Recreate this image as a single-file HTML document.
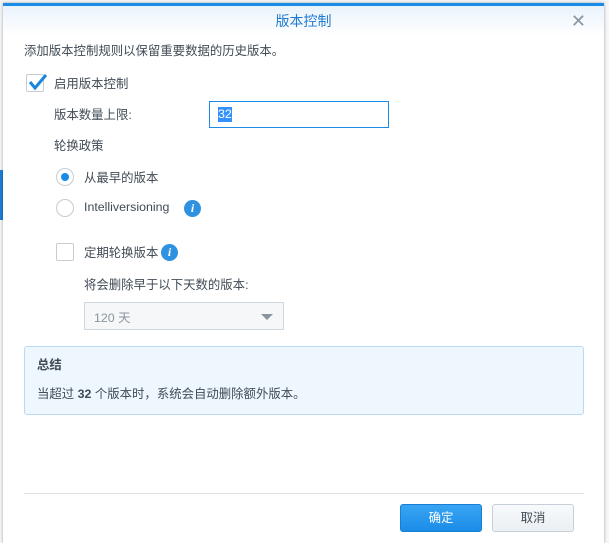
<!DOCTYPE html>
<html><head><meta charset="utf-8"><style>
*{margin:0;padding:0;box-sizing:border-box}
body{width:609px;height:538px;overflow:hidden;background:#f4f6f8;font-family:"Liberation Sans","Noto Sans CJK SC",sans-serif;font-size:12.4px;color:#414b55;position:relative}
.bg{position:absolute;left:0;top:170px;width:3px;height:50px;background:#1d7fd6}
.dlg{position:absolute;left:3px;top:3px;width:601px;height:540px;background:#fff;border-top:3px solid #1a8ce8;box-shadow:0 0 3px rgba(0,0,0,.35)}
.hdr{height:30px;background:linear-gradient(#e9f3fc,#fff);text-align:center;line-height:30px;color:#1f7ad1;font-size:14px}
.x{position:absolute;right:18px;top:5px;font-size:18px;color:#8a959f}
.a{position:absolute;white-space:nowrap}
.cb{position:absolute;width:18px;height:18px;border:1px solid #c5ccd4;background:#fff;border-radius:2px}
.rd{position:absolute;width:18px;height:18px;border:1px solid #c5ccd4;border-radius:50%;background:#fff}
.info{position:absolute;width:17px;height:17px;border-radius:50%;background:#2f92e0;color:#fff;font:italic bold 12px "Liberation Serif",serif;text-align:center;line-height:17px}
</style></head><body>
<div class="bg"></div>
<div class="dlg">
<div class="hdr">版本控制</div><div class="x">✕</div>
</div>
<div class="a" style="left:24px;top:41px">添加版本控制规则以保留重要数据的历史版本。</div>
<div class="cb" style="left:26px;top:74px"></div>
<svg class="a" style="left:26px;top:72px" width="22" height="20"><path d="M4 10 L9 16 L20 3" stroke="#1b86e0" stroke-width="3" fill="none"/></svg>
<div class="a" style="left:54px;top:74px">启用版本控制</div>
<div class="a" style="left:54px;top:105px">版本数量上限:</div>
<div class="a" style="left:209px;top:101px;width:180px;height:27px;border:1px solid #1a8ce8;background:#fff"><span style="position:absolute;left:8px;top:5px;background:#3390ff;color:#fff;line-height:15px">32</span></div>
<div class="a" style="left:54px;top:136px">轮换政策</div>
<div class="rd" style="left:56px;top:168px"><div style="position:absolute;left:4px;top:4px;width:8px;height:8px;border-radius:50%;background:#1a8ce8"></div></div>
<div class="a" style="left:84px;top:168px">从最早的版本</div>
<div class="rd" style="left:56px;top:199px"></div>
<div class="a" style="left:84px;top:200px">Intelliversioning</div>
<div class="info" style="left:184px;top:200px">i</div>
<div class="cb" style="left:56px;top:243px"></div>
<div class="a" style="left:84px;top:243px">定期轮换版本</div>
<div class="info" style="left:161px;top:244px">i</div>
<div class="a" style="left:84px;top:275px">将会删除早于以下天数的版本:</div>
<div class="a" style="left:84px;top:302px;width:200px;height:28px;border:1px solid #cfd6dc;background:#f5f7f9;color:#8a949e;padding:5px 9px">120 天<span style="position:absolute;right:10px;top:11px;border:6px solid transparent;border-top:6px solid #8a949e;border-bottom:0"></span></div>
<div class="a" style="left:24px;top:346px;width:560px;height:69px;background:#eff7fe;border:1px solid #b9daf3;border-radius:3px"></div>
<div class="a" style="left:37px;top:355px;font-weight:bold">总结</div>
<div class="a" style="left:37px;top:384px">当超过 <b>32</b> 个版本时，系统会自动删除额外版本。</div>
<div class="a" style="left:24px;top:493px;width:560px;height:1px;background:#dde1e5"></div>
<div class="a" style="left:400px;top:504px;width:82px;height:28px;border:1px solid #1580d4;border-radius:3px;background:linear-gradient(#3aa4f2,#1a8ce8);color:#fff;text-align:center;line-height:26px">确定</div>
<div class="a" style="left:492px;top:504px;width:82px;height:28px;border:1px solid #c7d0d8;border-radius:3px;background:linear-gradient(#f8fafc,#eaeff3);text-align:center;line-height:26px">取消</div>
</body></html>
